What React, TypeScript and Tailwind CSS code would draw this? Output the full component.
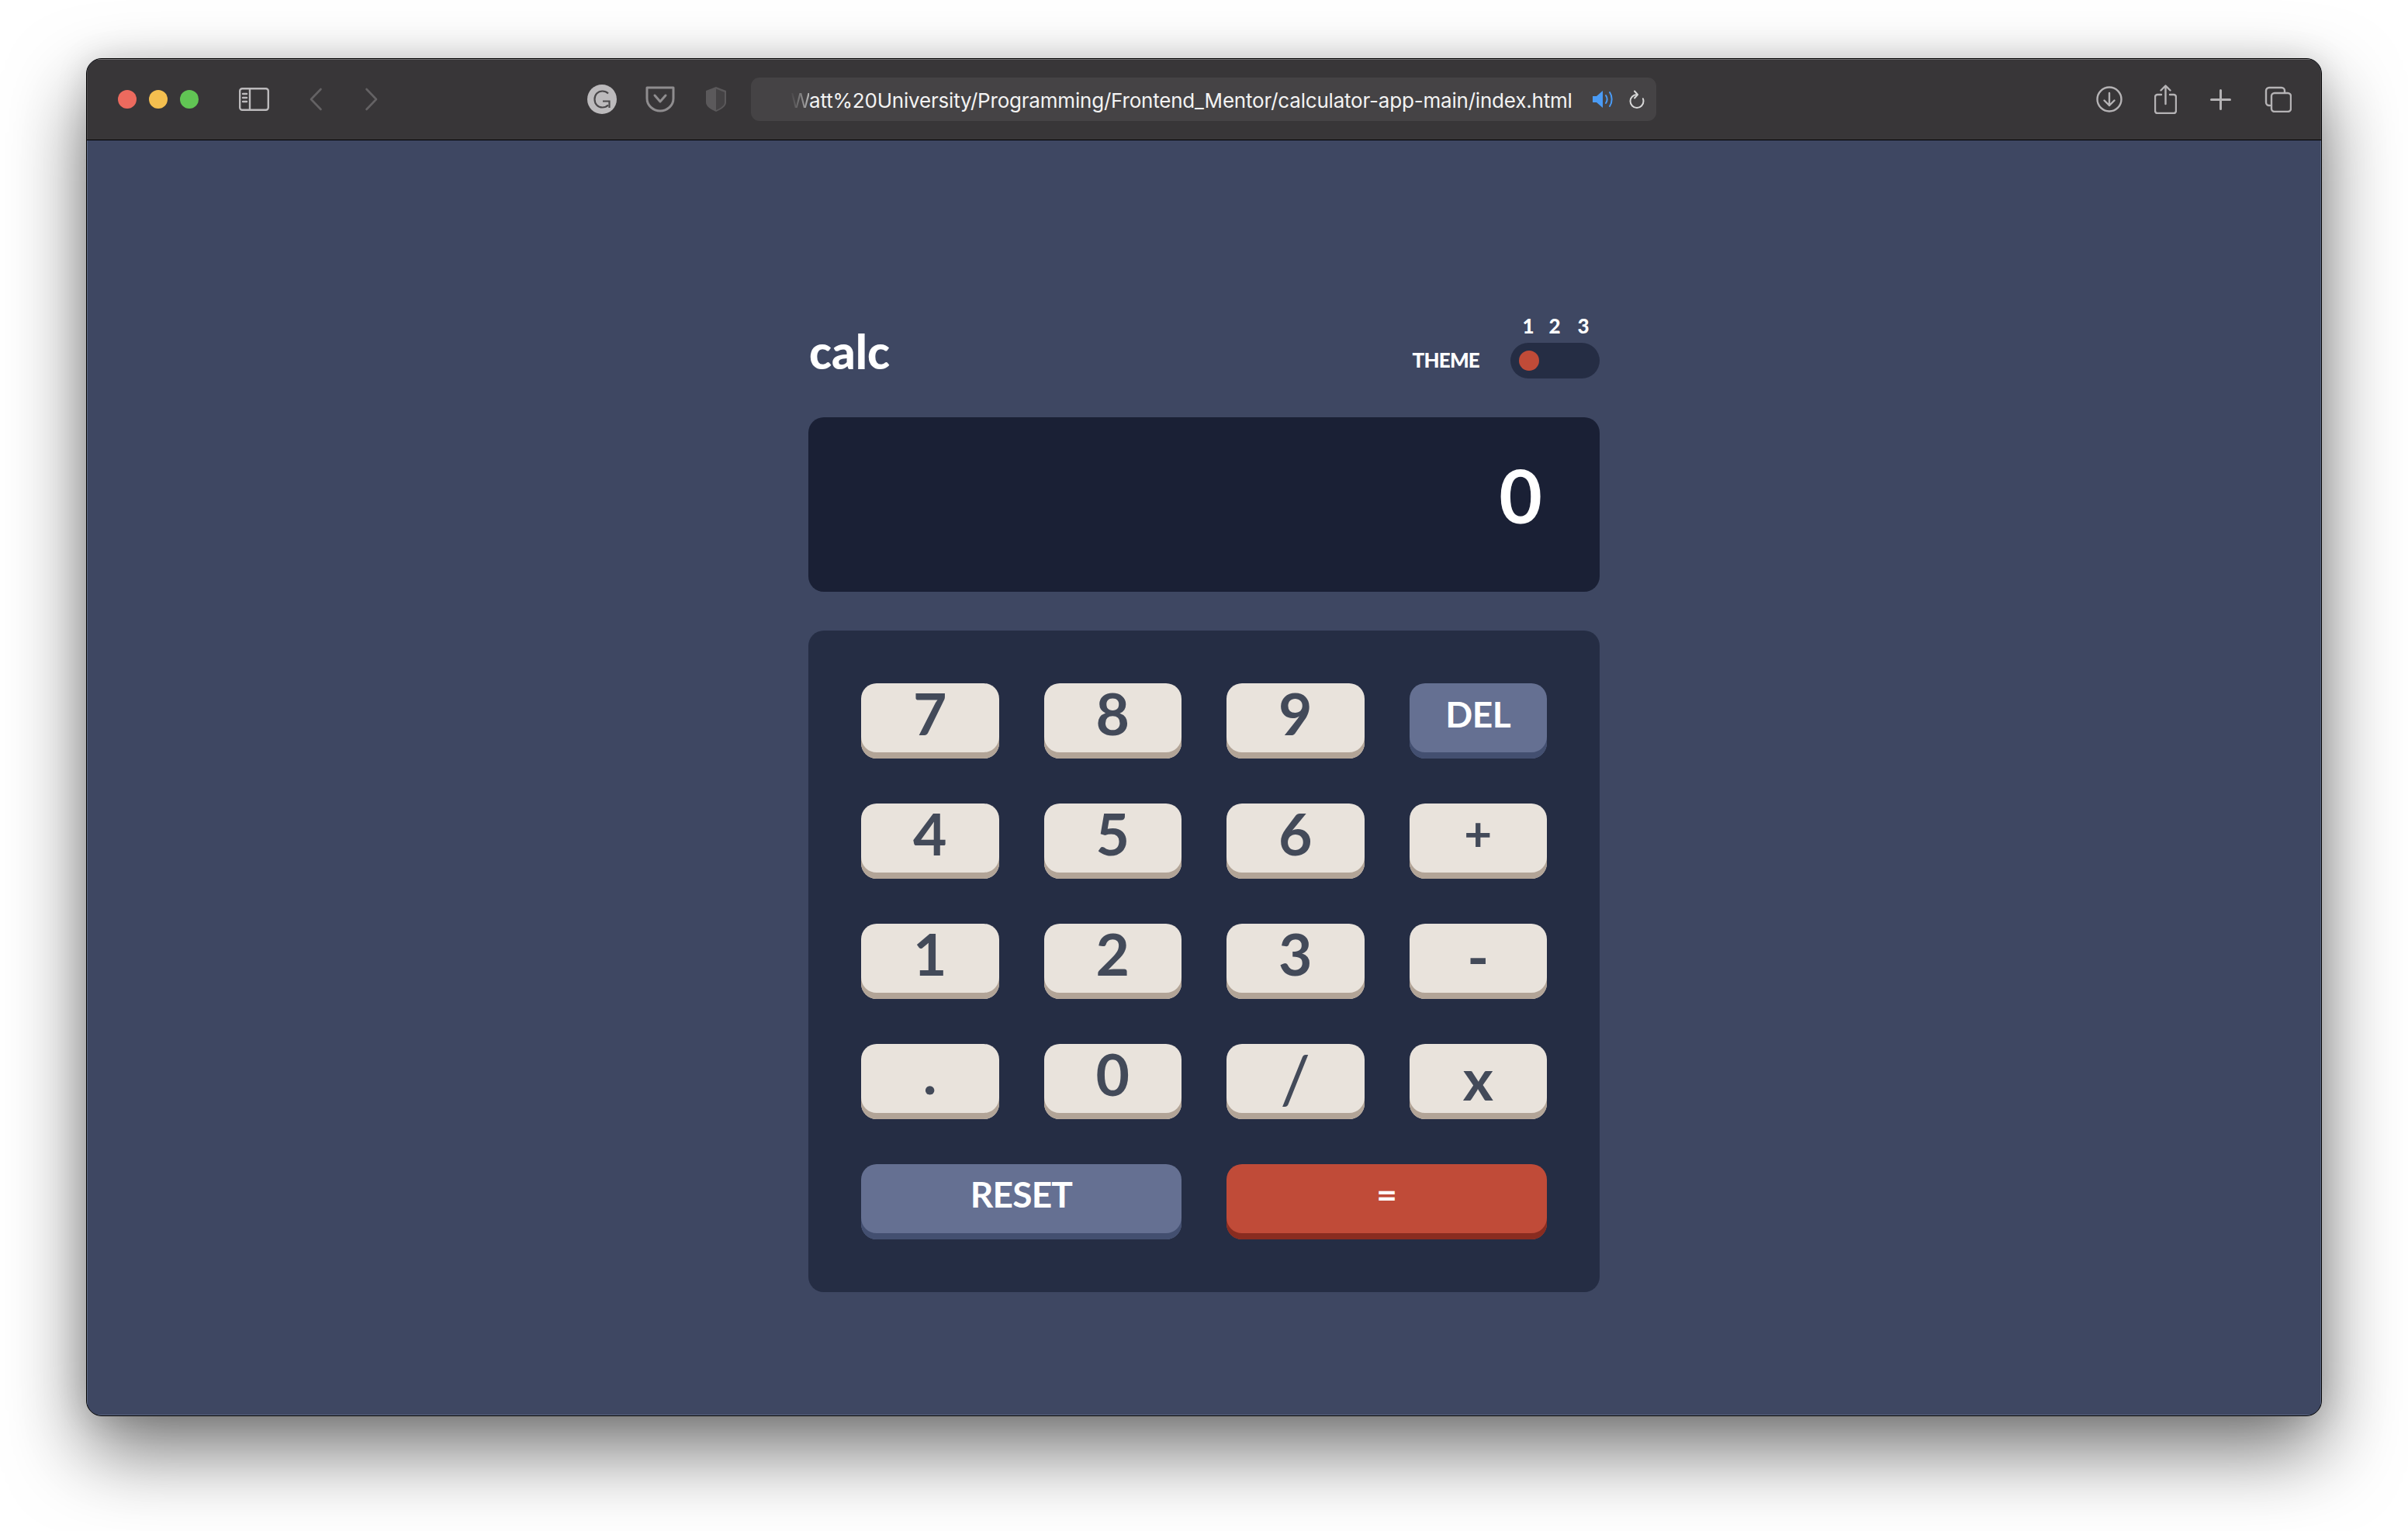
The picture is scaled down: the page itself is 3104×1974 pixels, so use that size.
import React from "react";

const keyBase =
  "flex items-center justify-center rounded-[20px] font-bold leading-none h-[97px]";
const light = "bg-[#e9e3dc] text-[#434a59] shadow-[inset_0_-8px_0_#b2a497]";
const blue = "bg-[#657092] text-white shadow-[inset_0_-8px_0_#434f70]";
const red = "bg-[#c04b38] text-white shadow-[inset_0_-8px_0_#892c20]";

function Key({ label, cls }: { label: string; cls: string }) {
  return <button className={`${keyBase} ${cls}`}>{label}</button>;
}

function Toolbar() {
  const s = { fill: "none", stroke: "#b5b3b5", strokeWidth: 2.4, strokeLinecap: "round" as const, strokeLinejoin: "round" as const };
  return (
    <div className="flex items-center h-[104px] pl-[40px] bg-[#383638] shadow-[inset_0_1px_0_#777577,inset_1px_0_0_#4c4a4c,inset_-1px_0_0_#4c4a4c] border-b border-black box-content">
      <div className="w-[24px] h-[24px] rounded-full bg-[#ec6a5e]" />
      <div className="w-[24px] h-[24px] rounded-full bg-[#f4bf4f] ml-[16px]" />
      <div className="w-[24px] h-[24px] rounded-full bg-[#61c554] ml-[16px]" />
      <svg className="ml-[52px] shrink-0" width="39" height="30" viewBox="0 0 39 30">
        <rect x="1.2" y="1.2" width="36.6" height="27.6" rx="3" {...s} stroke="#bcbabc" />
        <path d="M14 1.5V28.5" {...s} stroke="#bcbabc" />
        <path d="M5 8h5M5 13h5M5 18h5" {...s} stroke="#bcbabc" />
      </svg>
      <svg className="ml-[51px] shrink-0" width="18" height="30" viewBox="0 0 18 30">
        <path d="M15.5 2L3 15l12.500 13" {...s} stroke="#646264" strokeWidth="2.6" />
      </svg>
      <svg className="ml-[54px] shrink-0" width="18" height="30" viewBox="0 0 18 30">
        <path d="M2.500 2L15 15 2.500 28" {...s} stroke="#646264" strokeWidth="2.6" />
      </svg>
      <svg className="ml-[269px] shrink-0" width="38" height="38" viewBox="0 0 38 38">
        <circle cx="19" cy="19" r="19" fill="#bcbabc" />
        <path d="M27 11.500C24.800 9.300 22.300 8.500 19.500 8.500 13.500 8.500 9.500 13 9.500 19s4 10.500 10 10.500c3 0 5.500-1 7.500-3" fill="none" stroke="#4a484a" strokeWidth="2.2" />
        <path d="M20 21.500h8.500V30" fill="none" stroke="#4a484a" strokeWidth="2.2" />
      </svg>
      <svg className="ml-[37px] shrink-0" width="38" height="34" viewBox="0 0 38 34">
        <path d="M2 2h34v14c0 9-8 16-17 16S2 25 2 16V2z" {...s} stroke="#8f8d8f" strokeWidth="3" />
        <path d="M12 12l7 8 7-8" {...s} stroke="#8f8d8f" strokeWidth="3" />
      </svg>
      <svg className="ml-[39px] shrink-0" width="28" height="34" viewBox="0 0 28 34">
        <path d="M14 1L27 6v15c0 5-6 9-13 12C7 30 1 26 1 21V6z" fill="#5b595b" />
        <path d="M14 3.500L25 8v13c0 4-5 7.500-11 10z" fill="#444244" />
      </svg>
      <div className="ml-[31px] w-[1167px] h-[56px] shrink-0 rounded-[11px] bg-[#454345] flex items-center pl-[51px] font-['Inter',sans-serif] text-[26px] text-[#f3f3f3] leading-none whitespace-nowrap">
        <span className="w-[1012px] shrink-0 pt-[3px] tracking-[-0.2px]">
          <span className="bg-gradient-to-r from-[#454345] to-[#b5b5b5] bg-clip-text text-transparent">W</span>
          att%20University/Programming/Frontend_Mentor/calculator-app-main/index.html
        </span>
        <svg className="ml-[21px] shrink-0" width="28" height="24" viewBox="0 0 28 24">
          <path d="M1 8h5l8-7v22l-8-7H1z" fill="#4a9bf5" />
          <path d="M18 7c2 3 2 7 0 10M23 3c3.500 5 3.500 13 0 18" fill="none" stroke="#4a9bf5" strokeWidth="2" strokeLinecap="round" />
        </svg>
        <svg className="ml-[20px] shrink-0" width="20" height="25" viewBox="0 0 20 25">
          <path d="M10 6A8.500 8.500 0 1 0 18.500 14.500c0-1.200-.2-2.200-.6-3.200" fill="none" stroke="#d8d8d8" strokeWidth="2" strokeLinecap="round" />
          <path d="M7 1.500l4 4.500-4 4.500" fill="none" stroke="#d8d8d8" strokeWidth="2" strokeLinecap="round" strokeLinejoin="round" />
        </svg>
      </div>
      <svg className="ml-[567px] shrink-0" width="34" height="34" viewBox="0 0 34 34">
        <circle cx="17" cy="17" r="15.500" {...s} />
        <path d="M17 9v16M10.500 18.500L17 25l6.500-6.500" {...s} />
      </svg>
      <svg className="ml-[41px] shrink-0" width="29" height="38" viewBox="0 0 29 38">
        <path d="M9 13H4a3 3 0 0 0-3 3v18a3 3 0 0 0 3 3h21a3 3 0 0 0 3-3V16a3 3 0 0 0-3-3h-5" {...s} />
        <path d="M14.500 25V2M8.500 7.500l6-6 6 6" {...s} />
      </svg>
      <svg className="ml-[43px] shrink-0" width="27" height="27" viewBox="0 0 27 27">
        <path d="M13.500 1.500v24M1.500 13.500h24" {...s} strokeWidth="3" />
      </svg>
      <svg className="ml-[43px] shrink-0" width="35" height="34" viewBox="0 0 35 34">
        <path d="M7 25H6a4 4 0 0 1-4-4V6a4 4 0 0 1 4-4h16a4 4 0 0 1 4 4v2" {...s} />
        <rect x="9" y="9" width="25" height="24" rx="4" {...s} />
      </svg>
    </div>
  );
}

function Calculator() {
  return (
    <div className="w-[1020px] mx-auto pt-[224px] font-['Lato',sans-serif] font-bold text-white">
      <div className="flex justify-between items-end h-[83px]">
        <div className="text-[60px] leading-none pl-[1px] pb-[5px] font-black">calc</div>
        <div className="flex items-end">
          <div className="text-[26px] leading-none tracking-[-0.8px] pb-[11px] mr-[40px] font-black">THEME</div>
          <div className="w-[115px]">
            <div className="flex text-[26px] leading-none h-[35px] font-black">
              <span className="w-[20px] text-center ml-[13px]">1</span>
              <span className="w-[20px] text-center ml-[14px]">2</span>
              <span className="w-[20px] text-center ml-[17px]">3</span>
            </div>
            <div className="h-[46px] rounded-full bg-[#252d44] flex items-center pl-[11px]">
              <div className="w-[26px] h-[26px] rounded-full bg-[#c04b38]" />
            </div>
          </div>
        </div>
      </div>
      <div className="mt-[50px] h-[225px] rounded-[20px] bg-[#1a2035] flex items-center justify-end pr-[74px] pb-[26px] text-[96px] leading-none">
        0
      </div>
      <div className="mt-[50px] p-[68px] rounded-[20px] bg-[#252d44] grid grid-cols-4 gap-x-[58px] gap-y-[58px] text-[75px]">
        <Key label="7" cls={`${light} pb-[20px]`} />
        <Key label="8" cls={`${light} pb-[20px]`} />
        <Key label="9" cls={`${light} pb-[20px]`} />
        <Key label="DEL" cls={`${blue} pb-[18px] text-[46px] tracking-[-0.5px]`} />
        <Key label="4" cls={`${light} pb-[20px]`} />
        <Key label="5" cls={`${light} pb-[20px]`} />
        <Key label="6" cls={`${light} pb-[20px]`} />
        <Key label="+" cls={`${light} pb-[24px] text-[62px] font-black`} />
        <Key label="1" cls={`${light} pb-[20px]`} />
        <Key label="2" cls={`${light} pb-[20px]`} />
        <Key label="3" cls={`${light} pb-[20px]`} />
        <Key label="-" cls={`${light} pb-[12px] font-black`} />
        <Key label="." cls={`${light} pb-[24px] font-black`} />
        <Key label="0" cls={`${light} pb-[20px]`} />
        <Key label="/" cls={`${light} pb-[10px] text-[86px] font-normal`} />
        <Key label="x" cls={`${light} pb-[8px]`} />
        <Key label="RESET" cls={`${blue} col-span-2 pb-[20px] text-[46px] tracking-[-0.8px]`} />
        <Key label="=" cls={`${red} col-span-2 pb-[20px] text-[46px] font-black`} />
      </div>
    </div>
  );
}

export default function App() {
  return (
    <div className="w-[3104px] h-[1974px] bg-white pt-[75px] pl-[111px] overflow-hidden">
      <div className="w-[2882px] h-[1751px] rounded-[20px] border border-black bg-[#3e4762] overflow-hidden shadow-[0_44px_100px_rgba(0,0,0,0.55),0_0_40px_rgba(0,0,0,0.12)]">
        <Toolbar />
        <div className="h-[1644px] shadow-[inset_1px_0_0_#5f6a85,inset_-1px_0_0_#5f6a85,inset_0_-1px_0_#5f6a85]">
          <Calculator />
        </div>
      </div>
    </div>
  );
}
